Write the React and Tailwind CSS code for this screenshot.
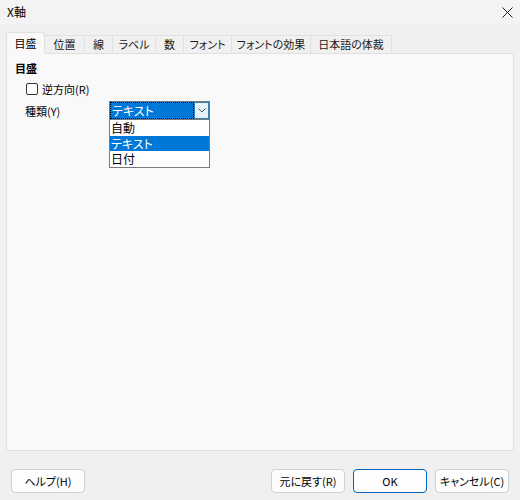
import React from "react";

const tabs = [
  { label: "目盛", w: "w-[39px]", active: true },
  { label: "位置", w: "w-[40px]" },
  { label: "線", w: "w-[28px]" },
  { label: "ラベル", w: "w-[43px]" },
  { label: "数", w: "w-[28px]" },
  { label: "フォント", w: "w-[48px]" },
  { label: "フォントの効果", w: "w-[79px]" },
  { label: "日本語の体裁", w: "w-[81px]" },
];

function Button({ children, primary }) {
  return (
    <button
      className={
        primary
          ? "w-[74px] h-[24px] rounded-[4px] border border-[#0067c0] bg-[#fdfdfd] text-[11px] text-black"
          : "w-[74px] h-[24px] rounded-[4px] border border-[#d0d0d0] bg-[#fdfdfd] text-[11px] text-black"
      }
    >
      {children}
    </button>
  );
}

export default function App() {
  return (
    <div className="w-[520px] h-[500px] bg-[#f0f0f0] flex flex-col font-['Noto_Sans_CJK_JP',sans-serif] [font-feature-settings:'palt'] text-[11px] text-black leading-none">
      {/* title bar */}
      <div className="h-[24px] bg-[#f3f3f3] flex items-center justify-between pl-[7px] pr-[7px]">
        <span className="text-[12px]">X軸</span>
        <svg width="11" height="11" viewBox="0 0 11 11">
          <path d="M0.5 0.5 L10.5 10.5 M10.5 0.5 L0.5 10.5" stroke="#222" strokeWidth="1" />
        </svg>
      </div>

      {/* tabs */}
      <div className="mt-[8px] px-[6px] flex items-end h-[21px]">
        {tabs.map((t) =>
          t.active ? (
            <div
              key={t.label}
              className={`${t.w} h-[22px] -mb-px z-10 bg-[#f9f9f9] border border-b-0 border-[#e0e0e0] rounded-t-[3px] flex items-center justify-center`}
            >
              {t.label}
            </div>
          ) : (
            <div
              key={t.label}
              className={`${t.w} h-[18px] bg-[#f0f0f0] border-t border-r border-[#e0e0e0] flex items-center justify-center text-[#1a1a1a]`}
            >
              {t.label}
            </div>
          )
        )}
      </div>

      {/* panel */}
      <div className="mx-[6px] h-[398px] bg-[#f9f9f9] border border-[#e0e0e0] pt-[9px] pl-[8px]">
        <div className="font-bold text-[11px]">目盛</div>
        <label className="mt-[9px] ml-[11px] flex items-center gap-[4px]">
          <span className="w-[12px] h-[12px] rounded-[2px] border border-[#333] bg-white" />
          <span>逆方向(R)</span>
        </label>
        <div className="mt-[6px] ml-[10px] flex items-start">
          <span className="w-[84px] pt-[5px]">種類(Y)</span>
          <div className="w-[101px] flex flex-col">
            <div className="h-[19px] border border-[#7a7a7a] bg-white flex">
              <div className="flex-1 bg-[#0078d7] text-white border border-dotted border-black flex items-center pl-[1px] text-[12px]">
                テキスト
              </div>
              <div className="w-[15px] bg-[#e5f1fb] border border-[#3c7fb1] flex items-center justify-center">
                <svg width="8" height="5" viewBox="0 0 8 5">
                  <path d="M0.5 0.5 L4 4 L7.5 0.5" fill="none" stroke="#555" strokeWidth="1" />
                </svg>
              </div>
            </div>
            <div className="border border-t-0 border-[#7a7a7a] bg-white flex flex-col text-[12px]">
              <div className="h-[16px] flex items-center pl-[1px]">自動</div>
              <div className="h-[15px] flex items-center pl-[1px] bg-[#0078d7] text-white">テキスト</div>
              <div className="h-[16px] flex items-center pl-[1px]">日付</div>
            </div>
          </div>
        </div>
      </div>

      {/* footer */}
      <div className="mt-[18px] px-[11px] flex items-center">
        <Button>ヘルプ(H)</Button>
        <div className="flex-1" />
        <div className="flex gap-[8px] pr-0">
          <Button>元に戻す(R)</Button>
          <Button primary>OK</Button>
          <Button>キャンセル(C)</Button>
        </div>
      </div>
    </div>
  );
}
